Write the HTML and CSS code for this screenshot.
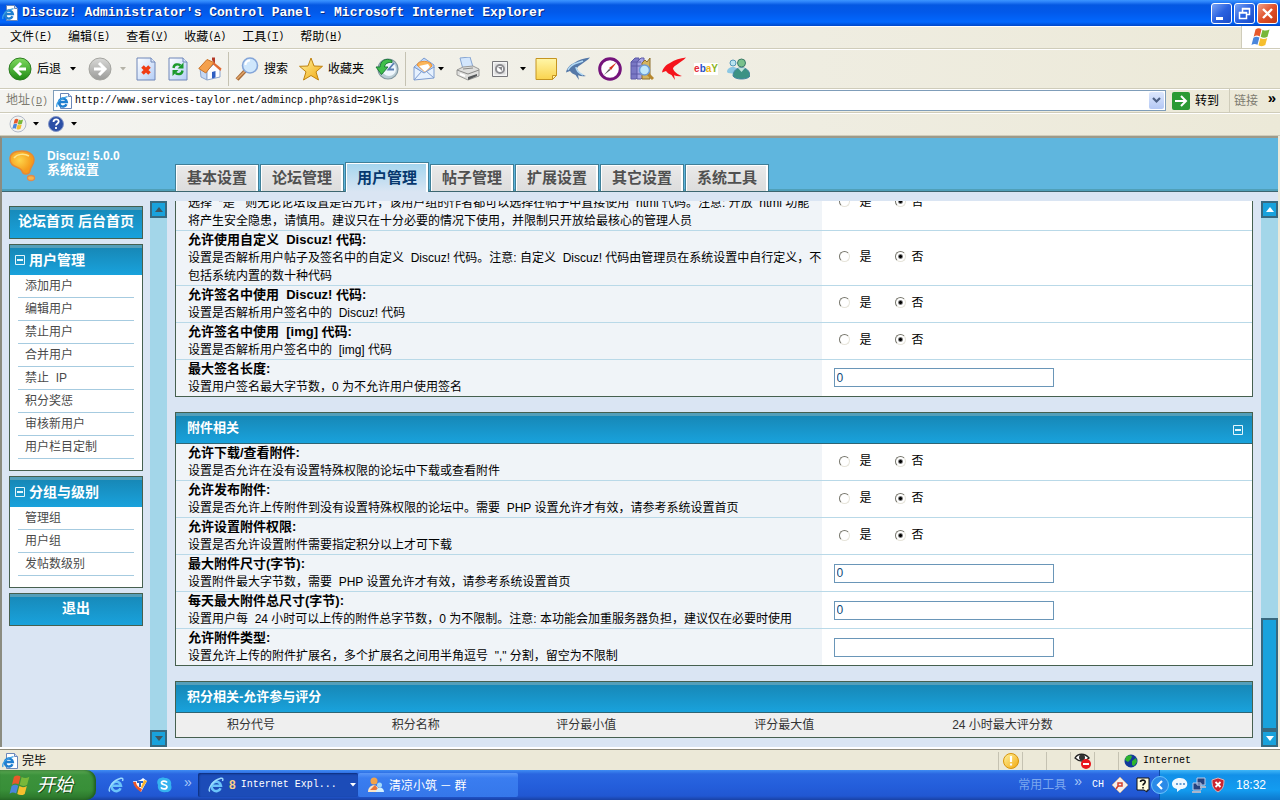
FILE: index.html
```html
<!DOCTYPE html>
<html lang="zh-CN">
	<head>
		<meta charset="UTF-8">
		<title>Discuz! Administrator's Control Panel</title>
		<link rel="stylesheet" href="styles.css">
	</head>
	<body>
		<svg class="defs" aria-hidden="true">
			<symbol id="ie" viewBox="0 0 16 16">
				<path d="M12.600 11.200A4.700 4.700 0 1 1 12.900 8.700H4.500" fill="none" stroke="#6cc4fa" stroke-width="2.600"/>
				<path d="M1.800 14.500C-.6 11.600 5 3.300 12.800 1.300c2.300-.5 2.400 1.100 1.600 2.700" fill="none" stroke="#9adafd" stroke-width="1.400"/>
			</symbol>
			<symbol id="iepage" viewBox="0 0 16 16">
				<path d="M4.500.5h8l3 3v12h-11z" fill="#fff" stroke="#6b87b8"/>
				<path d="M12.500.5v3h3" fill="#cbdcf4" stroke="#6b87b8"/>
				<path d="M10.500 11.200A4 4 0 1 1 10.800 9H3.500" fill="none" stroke="#1f7fd0" stroke-width="2.400"/>
				<path d="M1 14C-.5 10 5 4.500 11.500 3.600" fill="none" stroke="#3ba0e6" stroke-width="1.300"/>
			</symbol>
			<symbol id="flag" viewBox="0 0 20 20">
				<path d="M4.500 2.500c2-1.500 4-1.500 6-.3L8.700 9.400c-2-1.200-4-1.100-6 .3z" fill="#e8592a"/>
				<path d="M11.500 2.700c2 1.200 4.500 1.200 7-.2L16.500 9.700c-2.300 1.500-4.500 1.500-6.800.1z" fill="#78b83a"/>
				<path d="M2.400 10.800c2-1.400 4-1.400 6-.2l-1.900 7.200c-2-1.200-4-1.200-6 .2z" fill="#4a86dc"/>
				<path d="M9.400 11c2.200 1.300 4.500 1.300 6.800-.1l-1.900 7.200c-2.300 1.500-4.500 1.400-6.800.1z" fill="#f6bf2e"/>
			</symbol>
			<symbol id="caret" viewBox="0 0 6 4"><path d="M0 0h6L3 3.500z" fill="currentColor"/></symbol>
			<symbol id="minus" viewBox="0 0 10 10"><path d="M.5.5h9v9h-9z" fill="none" stroke="#e4f6fc"/><path d="M2 4h6v2H2z" fill="#e4f6fc"/></symbol>
			<symbol id="swallow" viewBox="0 0 24 24">
				<path d="M24 .5C18 1.500 13 2.500 8 6 4 7.500 1 11 0 15.500L4 14c1 2 3.500 3.300 5.500 4l3.500 5-1-4.700c2.500 1 5.500 1.200 8 .7-4-1.500-8-4-9-7.500C11.500 8.500 19 6 24 .5z" fill="currentColor"/>
			</symbol>
			<linearGradient id="green" x1="0" y1="0" x2="0" y2="1"><stop offset="0" stop-color="#7fdb5f"/><stop offset="1" stop-color="#1f8a14"/></linearGradient>
			<linearGradient id="grey" x1="0" y1="0" x2="0" y2="1"><stop offset="0" stop-color="#d8d8d6"/><stop offset="1" stop-color="#9b9b99"/></linearGradient>
			<linearGradient id="gold" x1="0" y1="0" x2="1" y2="1"><stop offset="0" stop-color="#fff3a0"/><stop offset="1" stop-color="#f2a80e"/></linearGradient>
			<linearGradient id="note" x1="0" y1="0" x2="0" y2="1"><stop offset="0" stop-color="#fff6a8"/><stop offset="1" stop-color="#fad34e"/></linearGradient>
			<linearGradient id="sheet" x1="0" y1="0" x2="1" y2="1"><stop offset="0" stop-color="#fff"/><stop offset="1" stop-color="#b3cdf6"/></linearGradient>
			<radialGradient id="bulb" cx=".4" cy=".4"><stop offset="0" stop-color="#fdd54a"/><stop offset="1" stop-color="#f69c1c"/></radialGradient>
		</svg>

		<div class="titlebar">
			<svg width="16" height="16"><use href="#iepage"/></svg>
			<h1>Discuz! Administrator's Control Panel - Microsoft Internet Explorer</h1>
			<div class="winbtns">
				<button aria-label="最小化"><svg width="19" height="19"><path d="M4 13h7v3H4z" fill="#fff"/></svg></button>
				<button aria-label="还原"><svg width="19" height="19"><path d="M7.500 8V4.500h7v6H12M7 5h8M4.500 8.500h7v6h-7zM4 9h8" fill="none" stroke="#fff" stroke-width="1.500"/></svg></button>
				<button class="close" aria-label="关闭"><svg width="19" height="19"><path d="M5 5l9 9M14 5l-9 9" stroke="#fff" stroke-width="2.400"/></svg></button>
			</div>
		</div>

		<div class="menubar">
			<nav>
				<button>文件<span>(<u>F</u>)</span></button>
				<button>编辑<span>(<u>E</u>)</span></button>
				<button>查看<span>(<u>V</u>)</span></button>
				<button>收藏<span>(<u>A</u>)</span></button>
				<button>工具<span>(<u>T</u>)</span></button>
				<button>帮助<span>(<u>H</u>)</span></button>
			</nav>
			<div class="throbber"><svg width="20" height="20"><use href="#flag"/></svg></div>
		</div>

		<div class="toolbar">
			<button class="split">
				<svg width="24" height="24"><circle cx="12" cy="12" r="11" fill="url(#green)" stroke="#2e7d22"/><path d="M13 6l-6 6 6 6M8 12h10" fill="none" stroke="#fff" stroke-width="3"/></svg>
				<span>后退</span>
				<svg class="caret late" width="6" height="4"><use href="#caret"/></svg>
			</button>
			<button aria-label="前进"><svg width="24" height="24"><circle cx="12" cy="12" r="11" fill="url(#grey)" stroke="#a5a5a0"/><path d="M11 6l6 6-6 6M16 12H6" fill="none" stroke="#fff" stroke-width="3"/></svg></button>
			<button class="off" aria-label="前进记录"><svg width="6" height="4"><use href="#caret"/></svg></button>
			<button aria-label="停止"><svg width="24" height="24"><path d="M3 1h14l4 4v18H3z" fill="url(#sheet)" stroke="#6e86b8"/><path d="M17 1v4h4" fill="#dce8fa" stroke="#6e86b8"/><path d="M8.500 9.500l7 7M15.500 9.500l-7 7" stroke="#f03c14" stroke-width="3.600"/></svg></button>
			<button aria-label="刷新"><svg width="24" height="24"><path d="M3 1h14l4 4v18H3z" fill="url(#sheet)" stroke="#6e86b8"/><path d="M17 1v4h4" fill="#dce8fa" stroke="#6e86b8"/><path d="M7.500 11c.5-4 4.500-4.500 7-2.500M16.500 13.500c-.5 4-4.500 4.500-7 2.500" fill="none" stroke="#1c9a2c" stroke-width="2.400"/><path d="M17.500 5.500v6h-6zM6.500 19v-6h6z" fill="#1c9a2c"/></svg></button>
			<button aria-label="主页"><svg width="24" height="24"><path d="M14 3V.5h3V7" fill="#b33a28"/><path d="M2 11l7 4v8l-6-3z" fill="#c5d8f4" stroke="#8ba4cd"/><path d="M9 14l7-7 6 6v7l-13 3z" fill="#fafcff" stroke="#8ba4cd"/><path d="M9 2.500L.8 11.500l7 4.500L16 5.500z" fill="#f4a04c" stroke="#c97228"/><path d="M15.500 5l-1 2 8 7 1-2.500z" fill="#e06a32"/><path d="M14 15l3.500-1v6.500L14 21.500z" fill="#2d5ec2"/></svg></button>
			<i class="sep"></i>
			<button class="labelled"><svg width="24" height="24"><path d="M10 14l-8 8.500" stroke="#a96b38" stroke-width="4"/><path d="M10 14l-8 8" stroke="#e3a86a" stroke-width="1.500"/><circle cx="15" cy="8.500" r="7.500" fill="#cfe7fc" stroke="#84a5d8" stroke-width="1.600"/><path d="M10.500 8c0-3 2-4.500 4.500-4.500" fill="none" stroke="#fff" stroke-width="2"/></svg><span>搜索</span></button>
			<button class="labelled"><svg width="24" height="24"><path d="M12 1l3 8 8.500.3-6.500 5.500 2.500 8.200L12 18.500 4.500 23 7 14.800.5 9.300 9 9z" fill="url(#gold)" stroke="#bf820e"/></svg><span>收藏夹</span></button>
			<button aria-label="历史"><svg width="24" height="24"><circle cx="13" cy="12" r="10" fill="#b9ccd4" stroke="#8096a0" stroke-width="1.200"/><circle cx="14" cy="12" r="7" fill="#eef6fc"/><path d="M19 6l-5.500 6.500H19" fill="none" stroke="#5b7fb4" stroke-width="1.800"/><path d="M17 3.500C10 .5 5.500 4 5 10H1l5.500 7.500L13 10H9.500C10 6.500 13 5 17 5.500z" fill="#3fbf4a" stroke="#1c7a38"/></svg></button>
			<i class="sep"></i>
			<button class="split mail" aria-label="邮件">
				<svg width="24" height="24"><path d="M2 10L12 1l10 7v3l-9 6z" fill="#c0d8f8" stroke="#7d9cd0"/><path d="M5 8c1-5 14-5 15 1l-7 6z" fill="#fbb65a" stroke="#e9923a"/><path d="M7 9l9-2 2 3-5 5z" fill="#fff"/><path d="M2 10l10 6 10-6v11L2 23z" fill="#e6f1fe" stroke="#7d9cd0"/><path d="M2 23l8-9M22 21l-8-7" stroke="#7d9cd0"/></svg>
				<svg class="caret" width="6" height="4"><use href="#caret"/></svg>
			</button>
			<button aria-label="打印"><svg width="24" height="24"><path d="M4 1l10-1 3 10-10 2z" fill="#d3e6fc" stroke="#86a5d2"/><path d="M1 13l6-3 10-1 6 3v7l-11 4-11-5z" fill="#dfdfdd" stroke="#9a9a98"/><path d="M1 13l11 4 11-4M7 12l10-1" fill="none" stroke="#8a8a88"/><path d="M12 20l9-3v2l-9 4z" fill="#55585a"/><path d="M4 17l5 2" stroke="#fff" stroke-width="2"/></svg></button>
			<button aria-label="编辑"><svg width="24" height="24"><path d="M4.500 4.500h15v15h-15z" fill="#f4f4f4" stroke="#77777a"/><path d="M6.500 6.500h11v11h-11z" fill="#dcdcdc"/><circle cx="12" cy="12" r="4" fill="#fff" stroke="#8c8c90" stroke-width="2"/><path d="M10 10h4v4z" fill="#88888c"/></svg></button>
			<button aria-label="编辑选项"><svg width="6" height="4"><use href="#caret"/></svg></button>
			<button aria-label="便笺"><svg width="24" height="24"><path d="M2 1.500h20.500v17l-4 4H2z" fill="url(#note)" stroke="#c59520"/><path d="M18.500 22.500v-4h4z" fill="#fff0a8" stroke="#c59520"/></svg></button>
			<button class="bird" aria-label="迅雷"><svg width="24" height="24"><use href="#swallow"/><path d="M2 13c2-4 5-6 9-7l6-2M10 10c0 4 3 6 7 8" fill="none" stroke="#b4daf4" stroke-width="1.500"/></svg></button>
			<button aria-label="指南针"><svg width="24" height="24"><circle cx="12" cy="12" r="10.300" fill="#fff" stroke="#75147c" stroke-width="3"/><path d="M12.800 12.800L6 18l5-6z" fill="#555"/><path d="M18.500 5.500L11 11l2 2z" fill="#d8301c"/></svg></button>
			<button aria-label="信息检索"><svg width="24" height="24"><path d="M1 5l4-4h4v18l-3 3H1z" fill="#7a78c4" stroke="#5c5aa8"/><path d="M7 5l4-4h3v18l-3 3H7z" fill="#a7a5e4" stroke="#5c5aa8"/><path d="M1 5h10M1 9h10M1 17h10" stroke="#5c5aa8"/><path d="M12 6l3-3 2 2 3-4v21h-8z" fill="#d5b45e" stroke="#8d7030"/><path d="M18 17l5 5" stroke="#b7872e" stroke-width="3"/><circle cx="14.500" cy="13" r="5" fill="#c0e8fc" stroke="#6c9cd8" stroke-width="1.500"/></svg></button>
			<button class="bird red" aria-label="迅雷下载"><svg width="24" height="24"><use href="#swallow"/></svg></button>
			<button class="ebay" aria-label="eBay"><b>e</b><b>b</b><b>a</b><b>Y</b></button>
			<button aria-label="Messenger"><svg width="24" height="24"><circle cx="7" cy="6" r="3" fill="#b9e4f0" stroke="#5496b8"/><path d="M1 15c0-6 11-7 12 0l-3 2-8-1z" fill="#8cc8e4"/><circle cx="15.500" cy="6" r="4" fill="#7ac18c" stroke="#3c7a68"/><path d="M7 19c0-11 17-11 17 0-2 4-15 4-17 0z" fill="#3b9284" stroke="#4384a4"/><path d="M12 11l3.500 4 3.500-4" fill="#bfe3da"/></svg></button>
		</div>

		<form class="addressbar">
			<label for="url">地址<span>(<u>D</u>)</span></label>
			<div class="combo">
				<svg width="16" height="16"><use href="#iepage"/></svg>
				<input id="url" type="text" value="http://www.services-taylor.net/admincp.php?&amp;sid=29Kljs">
				<button type="button" aria-label="下拉"><svg width="9" height="7"><path d="M1 1l3.500 3.500L8 1" fill="none" stroke="#4d6185" stroke-width="2.200"/></svg></button>
			</div>
			<button class="go" type="button"><svg width="18" height="18"><rect width="18" height="18" rx="2" fill="#2b9a34"/><path d="M9 4l5 5-5 5M13 9H3" fill="none" stroke="#fff" stroke-width="2"/></svg>转到</button>
			<div class="links">链接<b>»</b></div>
		</form>

		<div class="linkbar">
			<button aria-label="Windows"><svg width="18" height="18"><circle cx="9" cy="9" r="8" fill="#f2f2f0" stroke="#b2bac8"/><use href="#flag" x="3" y="3" width="12" height="12"/></svg><svg width="6" height="4"><use href="#caret"/></svg></button>
			<button aria-label="帮助"><svg width="18" height="18"><circle cx="9" cy="9" r="7.500" fill="#2b4fa6" stroke="#8698c8"/><path d="M6.500 7c0-3.500 5.500-3.500 5.200-.3C11.500 8.500 9 8.500 9 10.500M9 12v2" fill="none" stroke="#fff" stroke-width="1.800"/></svg><svg width="6" height="4"><use href="#caret"/></svg></button>
		</div>

		<div class="page">
			<header class="top">
				<div class="brand">
					<svg width="28" height="34"><path d="M1 9C1 3 7 1 13 1s12 3 12 9c0 5-4 7-4 11-1 4-7 4-8 0C11 16 1 18 1 9z" fill="url(#bulb)" stroke="#e58a34" stroke-width="1.500"/><path d="M5 8c3-4 10-5 15-2" fill="none" stroke="#fee68c" stroke-width="1.500"/><ellipse cx="22" cy="28" rx="3.500" ry="2.500" fill="#f8b548" stroke="#de8c50" stroke-width="1.300"/></svg>
					<div><p>Discuz! 5.0.0</p><strong>系统设置</strong></div>
				</div>
				<nav class="tabs">
					<a href="#">基本设置</a>
					<a href="#">论坛管理</a>
					<a href="#" class="ac">用户管理</a>
					<a href="#">帖子管理</a>
					<a href="#">扩展设置</a>
					<a href="#">其它设置</a>
					<a href="#">系统工具</a>
				</nav>
			</header>

			<div class="frames">
				<aside class="side">
					<div class="bar"><a href="#">论坛首页</a> <a href="#">后台首页</a></div>
					<div class="box">
						<h2><svg width="10" height="10"><use href="#minus"/></svg>用户管理</h2>
						<ul>
							<li><a href="#">添加用户</a></li>
							<li><a href="#">编辑用户</a></li>
							<li><a href="#">禁止用户</a></li>
							<li><a href="#">合并用户</a></li>
							<li><a href="#">禁止&nbsp; IP</a></li>
							<li><a href="#">积分奖惩</a></li>
							<li><a href="#">审核新用户</a></li>
							<li><a href="#">用户栏目定制</a></li>
						</ul>
					</div>
					<div class="box">
						<h2><svg width="10" height="10"><use href="#minus"/></svg>分组与级别</h2>
						<ul>
							<li><a href="#">管理组</a></li>
							<li><a href="#">用户组</a></li>
							<li><a href="#">发帖数级别</a></li>
						</ul>
					</div>
					<div class="bar"><a href="#">退出</a></div>
				</aside>
				<div class="scroll idle">
					<button aria-label="向上"><svg width="8" height="5"><path d="M4 0l4 5H0z" fill="currentColor"/></svg></button>
					<button aria-label="向下"><svg width="8" height="5"><path d="M0 0h8L4 5z" fill="currentColor"/></svg></button>
				</div>

				<main>
					<section class="panel first">
						<table class="opts">
							<tr class="long">
								<td>选择&nbsp; “是”&nbsp; 则无论论坛设置是否允许，该用户组的作者都可以选择在帖子中直接使用&nbsp; html 代码。注意: 开放&nbsp; html 功能<br>将产生安全隐患，请慎用。建议只在十分必要的情况下使用，并限制只开放给最核心的管理人员</td>
								<td><label><input type="radio" name="html">是</label><label><input type="radio" name="html" checked>否</label></td>
							</tr>
							<tr>
								<td><b>允许使用自定义&nbsp; Discuz! 代码:</b>设置是否解析用户帖子及签名中的自定义&nbsp; Discuz! 代码。注意: 自定义&nbsp; Discuz! 代码由管理员在系统设置中自行定义，不<br>包括系统内置的数十种代码</td>
								<td><label><input type="radio" name="cust">是</label><label><input type="radio" name="cust" checked>否</label></td>
							</tr>
							<tr>
								<td><b>允许签名中使用&nbsp; Discuz! 代码:</b>设置是否解析用户签名中的&nbsp; Discuz! 代码</td>
								<td><label><input type="radio" name="sigcode">是</label><label><input type="radio" name="sigcode" checked>否</label></td>
							</tr>
							<tr>
								<td><b>允许签名中使用&nbsp; [img] 代码:</b>设置是否解析用户签名中的&nbsp; [img] 代码</td>
								<td><label><input type="radio" name="sigimg">是</label><label><input type="radio" name="sigimg" checked>否</label></td>
							</tr>
							<tr>
								<td><label for="maxsig"><b>最大签名长度:</b></label>设置用户签名最大字节数，0 为不允许用户使用签名</td>
								<td><input type="text" id="maxsig" value="0"></td>
							</tr>
						</table>
					</section>

					<section class="panel">
						<h3>附件相关<svg width="10" height="10"><use href="#minus"/></svg></h3>
						<table class="opts">
							<tr>
								<td><b>允许下载/查看附件:</b>设置是否允许在没有设置特殊权限的论坛中下载或查看附件</td>
								<td><label><input type="radio" name="getatt">是</label><label><input type="radio" name="getatt" checked>否</label></td>
							</tr>
							<tr>
								<td><b>允许发布附件:</b>设置是否允许上传附件到没有设置特殊权限的论坛中。需要&nbsp; PHP 设置允许才有效，请参考系统设置首页</td>
								<td><label><input type="radio" name="postatt">是</label><label><input type="radio" name="postatt" checked>否</label></td>
							</tr>
							<tr>
								<td><b>允许设置附件权限:</b>设置是否允许设置附件需要指定积分以上才可下载</td>
								<td><label><input type="radio" name="perm">是</label><label><input type="radio" name="perm" checked>否</label></td>
							</tr>
							<tr>
								<td><label for="maxatt"><b>最大附件尺寸(字节):</b></label>设置附件最大字节数，需要&nbsp; PHP 设置允许才有效，请参考系统设置首页</td>
								<td><input type="text" id="maxatt" value="0"></td>
							</tr>
							<tr>
								<td><label for="maxday"><b>每天最大附件总尺寸(字节):</b></label>设置用户每&nbsp; 24 小时可以上传的附件总字节数，0 为不限制。注意: 本功能会加重服务器负担，建议仅在必要时使用</td>
								<td><input type="text" id="maxday" value="0"></td>
							</tr>
							<tr>
								<td><label for="exts"><b>允许附件类型:</b></label>设置允许上传的附件扩展名，多个扩展名之间用半角逗号&nbsp; "," 分割，留空为不限制</td>
								<td><input type="text" id="exts"></td>
							</tr>
						</table>
					</section>

					<section class="panel">
						<h3>积分相关-允许参与评分</h3>
						<table class="credits">
							<tr><th>积分代号</th><th>积分名称</th><th class="w">评分最小值</th><th class="w">评分最大值</th><th class="rest">24 小时最大评分数</th></tr>
						</table>
					</section>
				</main>
				<div class="scroll">
					<button aria-label="向上"><svg width="8" height="5"><path d="M4 0l4 5H0z" fill="currentColor"/></svg></button>
					<i class="thumb"></i>
					<button aria-label="向下"><svg width="8" height="5"><path d="M0 0h8L4 5z" fill="currentColor"/></svg></button>
				</div>
			</div>
		</div>

		<div class="statusbar">
			<div class="done"><svg width="16" height="16"><use href="#iepage"/></svg>完毕</div>
			<div><svg width="18" height="18"><circle cx="9" cy="9" r="7.500" fill="url(#gold)" stroke="#d9950c"/><path d="M9 4v6M9 11.500v2" stroke="#fff" stroke-width="2.200"/></svg></div>
			<div></div>
			<div></div>
			<div><svg width="18" height="18"><path d="M1 6c3-5 10-5 14 0-4 4-10 4-14 0z" fill="#fff" stroke="#222" stroke-width="1.300"/><circle cx="8" cy="5.500" r="3" fill="#333"/><circle cx="12" cy="12" r="5" fill="#e8161c"/><path d="M9 12h6" stroke="#fff" stroke-width="2"/></svg></div>
			<div></div>
			<div class="zone"><svg width="14" height="14"><circle cx="7" cy="7" r="6.500" fill="#123a9c"/><path d="M2 3c2-2 4-2 6-1L7 5 4 8 1 6zM8 7l4-3 1 4-3 4-2-1z" fill="#2eb42e"/></svg>Internet</div>
		</div>

		<footer class="taskbar">
			<button class="start"><svg width="22" height="22"><use href="#flag"/></svg>开始</button>
			<div class="quick">
				<a href="#" aria-label="Internet Explorer"><svg width="16" height="16"><use href="#ie"/></svg></a>
				<a href="#" aria-label="腾讯"><svg width="16" height="16"><path d="M1 4c4 1 8-1 10-3l4 3-6 11C7 12 3 9 1 4z" fill="#fff"/><path d="M1 5c1 5 5 8 8 10l1-3C6 10 4 8 4 5z" fill="#ec5628"/><path d="M10 12l5-8-3-1-3 7z" fill="#f7b22c"/><path d="M5 5h6M8 5v5" stroke="#2264ca" stroke-width="2"/></svg></a>
				<a href="#" aria-label="Skype"><svg width="16" height="16"><path d="M5 1c2-1 4 0 4 0 5 0 7 4 6 7 2 4-2 8-5 7-5 1-9-2-8-7C0 5 2 1 5 1z" fill="#35b3f0"/><path d="M11 5.500c-1-2-6-2-5.500.5C6 8.500 11 7 11 10c-.5 2.500-5 2.500-6 .3" fill="none" stroke="#fff" stroke-width="1.700"/></svg></a>
				<span>»</span>
			</div>
			<button class="task ac"><svg width="16" height="16"><use href="#ie"/></svg><b>8</b><span>Internet Expl...</span><svg class="more" width="6" height="4"><use href="#caret"/></svg></button>
			<button class="task"><svg width="16" height="16"><circle cx="6" cy="4" r="3.500" fill="#f3a34a"/><path d="M0 15c0-9 12-9 11 0z" fill="#fce4c4"/><path d="M2 13l5-5 4 5z" fill="#e8753a"/><circle cx="11.500" cy="8" r="2.500" fill="#a5dbfa"/><path d="M8 15c0-6 8-6 8 0z" fill="#d2f0ff"/></svg><span class="zh">清凉小筑 － 群</span></button>
			<div class="tools">常用工具<span>»</span></div>
			<div class="lang">
				<span>CH</span>
				<svg width="16" height="16"><path d="M8 0l8 8-8 8-8-8z" fill="#f4eeea" stroke="#b9aaa4"/><path d="M6 10V6h4v3H6l-2 3" fill="none" stroke="#d2402c" stroke-width="1.500"/></svg>
				<svg width="14" height="16"><path d="M1 1h12v12h-2v2l-3-2H1z" fill="#fffce0" stroke="#111"/><path d="M4.500 5c0-2.500 5-2.500 4.700 0C9 7 7 6.500 7 8.500M7 10v1.500" fill="none" stroke="#111" stroke-width="1.600"/></svg>
			</div>
			<div class="tray">
				<svg class="arrow" width="18" height="18"><circle cx="9" cy="9" r="8.500" fill="#2a8ae8" stroke="#6cc0fa"/><path d="M11 5L7 9l4 4" fill="none" stroke="#fff" stroke-width="2.200"/></svg>
				<svg width="16" height="16"><path d="M8 1c9 0 10 11 1 11l-4 3v-3C-3 10-1 1 8 1z" fill="#f0f8ff"/><path d="M4 7h2M7.500 7h2M11 7h2" stroke="#3b82c8" stroke-width="1.500"/></svg>
				<svg width="16" height="16"><path d="M6 1h8v7H6zM2 6h8v7H2z" fill="#26427e" stroke="#bccbe8"/><path d="M1 15h9M9 10h6" stroke="#a9b6cc" stroke-width="2"/></svg>
				<svg width="16" height="16"><path d="M8 1l6 2c0 6-1 9-6 12C3 12 2 9 2 3z" fill="#cc2330" stroke="#dcb4b8"/><path d="M5.500 5l5 5M10.500 5l-5 5" stroke="#fff" stroke-width="1.800"/></svg>
				<time>18:32</time>
			</div>
		</footer>
	</body>
</html>
```

FILE: styles.css
```css
*{margin: 0;padding: 0;box-sizing: border-box;}
body{height: 100vh;display: flex;flex-direction: column;overflow: hidden;font: 12px/18px "Liberation Sans","Noto Sans CJK SC",sans-serif;color: #000;background: #ece9d8;}
button,input{font: inherit;color: inherit;}
button{border: 0;background: none;display: flex;align-items: center;white-space: nowrap;}
a{color: inherit;text-decoration: none;}
ul{list-style: none;}
svg{display: block;flex: none;}
.defs{position: absolute;width: 0;height: 0;}

/* 标题栏 */
.titlebar{height: 26px;flex: none;display: flex;align-items: center;padding: 0 2px;background: linear-gradient(#3c96ff 0,#2a80f8 2px,#0458e2 5px,#0259ea 12px,#0268fe 22px,#0047c8 26px);}
.titlebar h1{flex: 1;margin-left: 4px;font: bold 13px/20px "Liberation Mono",monospace;color: #fff;text-shadow: 1px 1px #0b2a80;white-space: nowrap;}
.winbtns{display: flex;gap: 2px;}
.winbtns button{width: 21px;height: 21px;border: 1px solid #fff;border-radius: 3px;background: linear-gradient(135deg,#7ba4f4,#2a62e0 50%,#1b4cc8);}
.winbtns .close{background: linear-gradient(135deg,#f0a088,#e0502a 50%,#c23a16);}

/* 菜单与工具栏 */
.menubar,.toolbar,.addressbar,.linkbar{flex: none;display: flex;background: linear-gradient(90deg,#f4f4f1,#ece9d8);border-bottom: 1px solid #cfccba;box-shadow: inset 0 1px #fff;}
.menubar{height: 23px;justify-content: space-between;}
.menubar nav{display: flex;gap: 16px;padding-left: 10px;}
.menubar span,.addressbar label span{font: 10px/18px "Liberation Mono",monospace;}
.throbber{width: 39px;display: flex;align-items: center;justify-content: center;background: #fff;border-left: 1px solid #cfccba;}
.toolbar{height: 40px;align-items: center;gap: 8px;padding-left: 8px;}
.toolbar .split{gap: 5px;padding-right: 4px;}
.toolbar .mail{gap: 2px;}
.toolbar .late{margin-left: 4px;}
.toolbar .labelled{gap: 5px;padding-right: 3px;}
.toolbar .off{color: #b5b3a8;}
.sep{width: 1px;height: 34px;margin: 0 -2px;background: #c5c2b2;}
.bird{color: #5478a8;}
.bird.red{color: #f5141c;}
.ebay{width: 24px;height: 12px;justify-content: center;background: #fff;font-size: 10px;line-height: 12px;}
.ebay b:nth-child(1){color: #e42a38;}
.ebay b:nth-child(2){color: #2b4fc8;}
.ebay b:nth-child(3){color: #f0b414;}
.ebay b:nth-child(4){color: #8cb51e;}
.addressbar{height: 24px;align-items: center;padding-left: 6px;}
.addressbar label{width: 47px;color: #7d7b70;}
.combo{flex: 1;height: 21px;display: flex;align-items: center;padding: 0 1px 0 2px;background: #fff;border: 1px solid #7f9db9;}
.combo input{flex: 1;border: 0;outline: 0;padding-left: 3px;font: 10px/18px "Liberation Mono",monospace;}
.combo button{width: 15px;height: 17px;justify-content: center;border-radius: 2px;background: linear-gradient(#dce7fd,#b4c8f4);}
.go{gap: 5px;margin: 0 10px 0 6px;}
.links{align-self: stretch;width: 51px;display: flex;justify-content: space-between;padding: 3px 4px;color: #7d7b70;border-left: 1px solid #cfccba;}
.links b{font-size: 15px;line-height: 12px;color: #000;}
.linkbar{height: 23px;align-items: center;gap: 8px;padding-left: 9px;}
.linkbar button{gap: 6px;}

/* 页面 */
.page{flex: 1;min-height: 0;display: flex;flex-direction: column;margin: 0 2px 0 0;border: 1px solid #7c786a;border-width: 2px 0 0 2px;border-color: #9d9a8a #fff #fff #8b8c80;background: #dae5f3;}
.top{flex: none;height: 54px;display: flex;align-items: flex-end;background: linear-gradient(#5fb6de 51px,#4f9fb8 51px);border-bottom: 1px solid #3d6670;}
.brand{width: 173px;height: 53px;display: flex;gap: 10px;padding: 12px 0 0 7px;color: #fff;}
.brand p,.brand strong{display: block;font-weight: bold;line-height: 13px;}
.brand strong{font-size: 13px;}
.tabs{display: flex;align-items: flex-end;gap: 1px;}
.tabs a{width: 84px;height: 27px;border: 1px solid #3f7f98;border-bottom: 0;box-shadow: inset 1px 1px #fff,inset -2px 0 #fff;background: linear-gradient(#eaeaea,#dcdcdc);color: #505050;font: bold 15px/24px "Noto Sans CJK SC",sans-serif;text-align: center;}
.tabs .ac{height: 30px;margin-bottom: -1px;color: #06386e;line-height: 27px;background: linear-gradient(#a3d5ee,#dae5f3);}
.frames{flex: 1;min-height: 0;display: flex;padding-top: 9px;}
.side{width: 134px;margin: 5px 7px 0;display: flex;flex-direction: column;gap: 5px;}
.bar,.box h2,.panel h3{background: linear-gradient(#1788b7,#19a2dc);border-top: 3px solid #549fba;color: #fff;font-weight: bold;}
.bar{height: 33px;border: 1px solid #46604f;box-shadow: inset 0 3px #549fba;font-size: 14px;line-height: 29px;text-align: center;white-space: nowrap;}
.box{padding-bottom: 11px;border: 1px solid #46604f;background: #fff;}
.box h2{height: 30px;display: flex;align-items: center;gap: 4px;padding: 0 5px 4px;font-size: 14px;}
.box li{height: 23px;margin: 0 8px;padding-left: 7px;border-bottom: 1px solid #a6cbe0;line-height: 22px;color: #4a4a4a;}
.scroll{width: 17px;display: flex;flex-direction: column;background: #a3d6e9;color: #fff;}
.scroll button,.thumb{width: 17px;border: 2px solid #38697f;background: #19a2dc;}
.scroll button{height: 17px;justify-content: center;}
.scroll button:last-child{margin-top: auto;}
.scroll .thumb{height: 112px;margin-top: auto;}
.scroll .thumb + button{margin-top: 0;}
.idle{color: #3f5660;}

main{flex: 1;min-width: 0;overflow: hidden;margin: 0 8px;display: flex;flex-direction: column;gap: 15px;}
.panel{flex: none;border: 1px solid #46604f;background: #fff;}
.first{margin-top: -27px;}
.panel h3{height: 31px;display: flex;align-items: center;justify-content: space-between;padding: 0 9px 3px 11px;border-bottom: 1px solid #2f6473;font-size: 13px;}
.panel h3 svg{margin-top: 5px;}
table{width: 100%;border-collapse: collapse;table-layout: fixed;}
.opts td{height: 37px;padding-left: 12px;border-bottom: 1px solid #b9d9e8;}
.opts tr:last-child td{height: 36px;border-bottom: 0;}
.opts td:first-child{width: 60%;background: #f0f4f8;white-space: nowrap;}
.opts b{display: block;font-size: 13px;}
.opts .long td{height: 55px;}
.opts .long td:first-child{vertical-align: bottom;}
.opts td:last-child label{display: inline-flex;align-items: center;width: 56px;padding-left: 5px;gap: 10px;}
.opts td:last-child label + label{gap: 6px;}
input[type=radio]{appearance: none;width: 11px;height: 11px;border: 1px solid;border-color: #77766c #e6e4da #e6e4da #77766c;border-radius: 50%;background: #fff;}
input[type=radio]:checked{background: radial-gradient(#000 1px,#fff 3px);}
.opts input[type=text]{display: block;width: 220px;height: 19px;padding: 0 2px;border: 1px solid #6a96b8;background: #fff;color: #0f4a78;outline: 0;}
.credits{background: #efefef;}
.credits th{width: 15.3%;height: 24px;padding-left: 51px;font-weight: normal;text-align: left;color: #333;white-space: nowrap;}
.credits .w{width: 18.4%;}
.credits .rest{width: auto;}

/* 状态栏 */
.statusbar{flex: none;height: 23px;display: grid;grid-template-columns: 1fr repeat(5,24px) 162px;align-items: center;padding-top: 2px;border-top: 2px solid #fff;box-shadow: inset 0 1px #8c897a;background: #ece9d8;}
.statusbar div{height: 18px;display: flex;align-items: center;justify-content: center;border-left: 1px solid #c5c2b2;}
.statusbar .done{justify-content: flex-start;gap: 4px;padding-left: 2px;border: 0;}
.statusbar .zone{justify-content: flex-start;gap: 5px;padding-left: 5px;font: 10px/18px "Liberation Mono",monospace;}

/* 任务栏 */
.taskbar{flex: none;height: 30px;display: flex;align-items: center;color: #fff;background: linear-gradient(#3f8cf3 0,#2a66e0 4px,#245edb 16px,#2157d2 26px,#1941a5 30px);}
.start{width: 96px;height: 30px;gap: 6px;padding-left: 9px;border-radius: 0 10px 10px 0;background: linear-gradient(#5fac56 0,#3c923c 5px,#388f38 20px,#2a7229 30px);box-shadow: inset -2px 0 3px #1f5c20;font-size: 18px;font-style: italic;text-shadow: 1px 1px #1c4c1c;}
.quick{width: 102px;display: flex;gap: 8px;padding-left: 12px;}
.quick span,.tools span{align-self: flex-start;font-size: 14px;line-height: 10px;color: #a9c9f8;}
.quick span{margin-left: 4px;}
.task{width: 160px;height: 24px;gap: 5px;padding: 0 10px;border-radius: 2px;background: linear-gradient(#5a97f8,#3a7df0 5px,#3577ea);}
.task.ac{background: #1c4cb8;box-shadow: inset 1px 1px 2px #0c2c78;}
.task b{color: #fbd08a;}
.task span{font: 10px/18px "Liberation Mono",monospace;}
.task .zh{font: 12px/18px "Noto Sans CJK SC",sans-serif;}
.task.ac .more{margin-left: auto;margin-right: -8px;}
.tools{display: flex;gap: 8px;margin-left: auto;color: #7ba7ee;}
.lang{display: flex;align-items: center;gap: 8px;padding: 0 9px 0 10px;}
.lang span{font: 10px/18px "Liberation Mono",monospace;}
.tray{height: 30px;display: flex;align-items: center;gap: 3px;padding-right: 14px;border-left: 1px solid #0c4ba8;background: linear-gradient(#3fb6f8 0,#1290e8 5px,#139cf0 20px,#0d78cc 30px);}
.tray .arrow{margin-left: -9px;}
.tray time{margin-left: 7px;}
```
